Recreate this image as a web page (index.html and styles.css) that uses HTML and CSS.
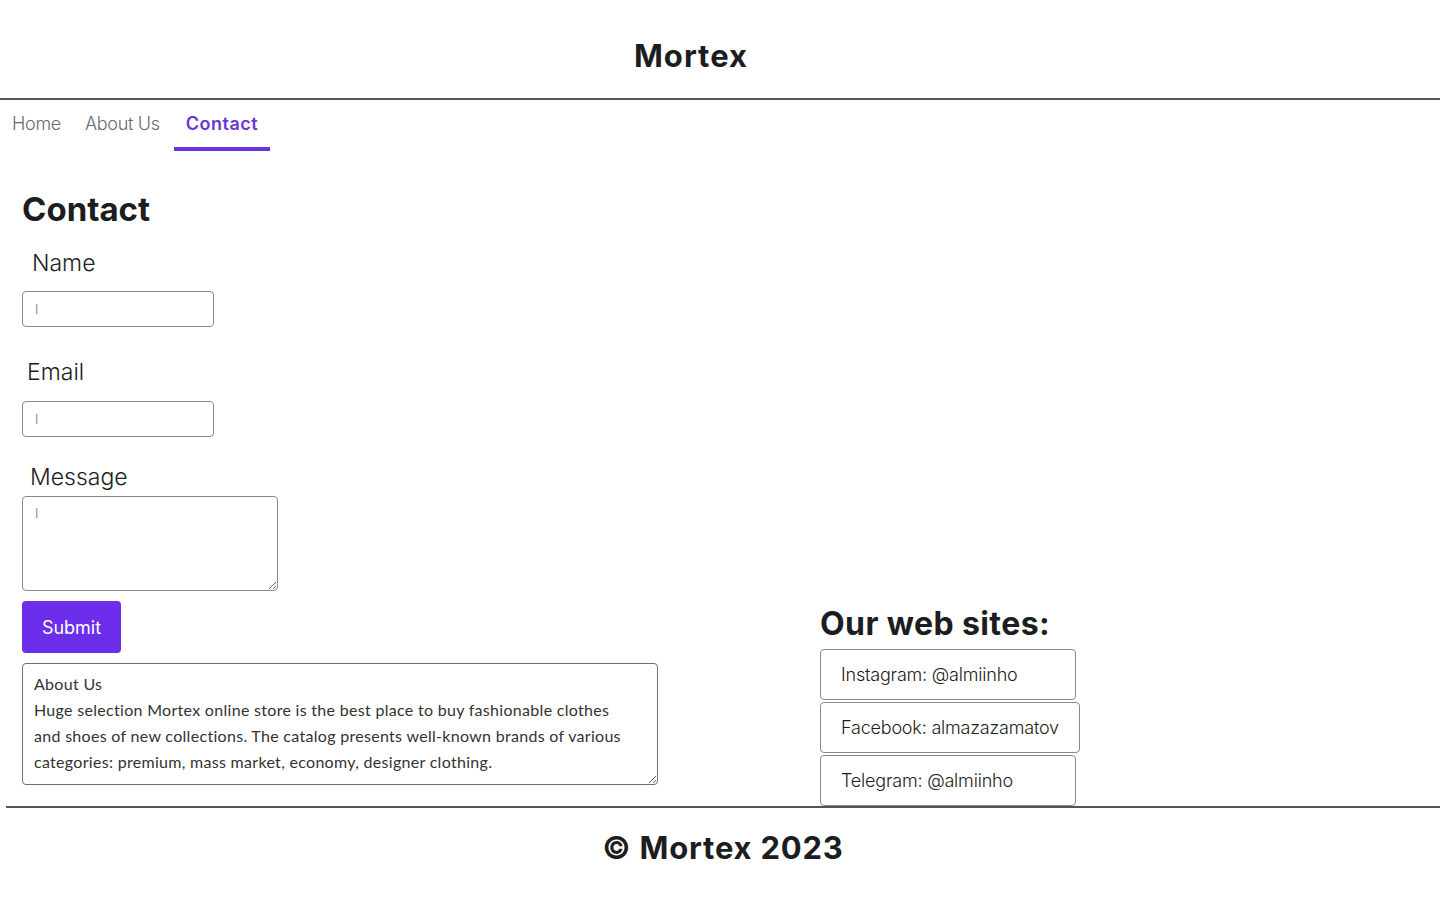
FILE: index.html
```html
<!DOCTYPE html>
<html lang="en">
  <head>
    <meta charset="UTF-8" />
    <meta name="viewport" content="width=device-width, initial-scale=1.0" />
    <title>Mortex - Contact</title>
    <link rel="stylesheet" href="styles.css">
  </head>
  <body>
    <header class="top">
      <h1 class="logo">Mortex</h1>
    </header>

    <nav class="tabs">
      <a href="#" class="tab">Home</a>
      <a href="#" class="tab">About Us</a>
      <a href="#" class="tab active">Contact</a>
    </nav>

    <main class="page">
      <div class="form_col">
        <h2 class="title">Contact</h2>
        <form class="contact_form">
          <div class="field field_name">
            <label for="name">Name</label>
            <input type="text" id="name" placeholder="I">
          </div>
          <div class="field field_email">
            <label for="email">Email</label>
            <input type="email" id="email" placeholder="I">
          </div>
          <div class="field field_msg">
            <label for="msg">Message</label>
            <textarea id="msg" placeholder="I"></textarea>
          </div>
          <button type="button" class="submitBtn">Submit</button>
        </form>
        <textarea class="about_box" readonly>About Us
Huge selection Mortex online store is the best place to buy fashionable clothes and shoes of new collections. The catalog presents well-known brands of various categories: premium, mass market, economy, designer clothing.</textarea>
      </div>

      <aside class="sites">
        <h2 class="sites_title">Our web sites:</h2>
        <a href="#" class="site_link">Instagram: @almiinho</a>
        <a href="#" class="site_link">Facebook: almazazamatov</a>
        <a href="#" class="site_link">Telegram: @almiinho</a>
      </aside>
    </main>

    <footer class="bottom">
      <p class="copy">© Mortex 2023</p>
    </footer>
  </body>
</html>
```

FILE: styles.css
```css
* {
  padding: 0;
  margin: 0;
  box-sizing: border-box;
}

body {
  font-family: Inter, "Liberation Sans", sans-serif;
  color: #1c1d21;
  background: #fff;
}

a {
  text-decoration: none;
}

/* header */
.top {
  height: 100px;
  padding: 38px 58px 0 0;
  border-bottom: 2px solid #555;
  text-align: center;
}

.logo {
  font-size: 31px;
  line-height: 36px;
  font-weight: 700;
  letter-spacing: 1px;
}

/* tabs */
.tabs {
  display: flex;
}

.tab {
  padding: 12px 12px 11px;
  font-size: 18px;
  line-height: 24px;
  font-weight: 300;
  letter-spacing: -0.3px;
  color: #666a73;
  border-bottom: 4px solid transparent;
}

.tab.active {
  margin-left: 2px;
  color: #6c34d8;
  font-weight: 600;
  letter-spacing: 0.5px;
  border-bottom-color: #6c34d8;
}

/* main */
.page {
  display: flex;
  align-items: flex-end;
  padding: 37px 0 0 22px;
}

.form_col {
  width: 636px;
  padding-bottom: 21px;
}

.title {
  font-size: 33px;
  line-height: 42px;
  font-weight: 700;
}

.field label {
  display: block;
  font-size: 23px;
  line-height: 27px;
  font-weight: 300;
  color: #1c1d21;
}

.field input {
  display: block;
  width: 192px;
  height: 36px;
  padding: 0 12px;
  border: 1px solid #8a8a8a;
  border-radius: 4px;
  outline: none;
  font-family: Inter, sans-serif;
  font-size: 13px;
}

.field_name {
  margin-top: 20px;
}
.field_name label {
  padding-left: 10px;
  margin-bottom: 14px;
}

.field_email {
  margin-top: 32px;
}
.field_email label {
  padding-left: 5px;
  margin-bottom: 15px;
}

.field_msg {
  margin-top: 27px;
}
.field_msg label {
  padding-left: 8px;
  margin-bottom: 5px;
}

.field textarea {
  display: block;
  width: 256px;
  height: 95px;
  padding: 8px 12px;
  border: 1px solid #8a8a8a;
  border-radius: 4px;
  outline: none;
  font-family: Inter, sans-serif;
  font-size: 13px;
}

.field input::placeholder,
.field textarea::placeholder {
  color: #777;
  font-weight: 300;
}

.submitBtn {
  display: block;
  margin-top: 10px;
  width: 99px;
  height: 52px;
  background: #6c2eea;
  color: #fff;
  border: none;
  border-radius: 4px;
  font-family: Inter, sans-serif;
  font-size: 18px;
  font-weight: 400;
  cursor: pointer;
}

.about_box {
  display: block;
  margin-top: 10px;
  width: 636px;
  height: 122px;
  padding: 7px 28px 7px 11px;
  border: 1px solid #6e6e6e;
  border-radius: 4px;
  outline: none;
  resize: vertical;
  font-family: Lato, sans-serif;
  font-size: 16px;
  line-height: 26px;
  font-weight: 400;
  letter-spacing: 0.3px;
  color: #333;
  overflow: hidden;
}

/* right column */
.sites {
  margin-left: 162px;
}

.sites_title {
  font-size: 32px;
  line-height: 39px;
  font-weight: 700;
  letter-spacing: 0.4px;
  margin-bottom: 6px;
}

.site_link {
  display: block;
  width: max-content;
  min-width: 256px;
  height: 51px;
  margin-top: 2px;
  padding: 0 20px;
  border: 1px solid #8a8a8a;
  border-radius: 4px;
  font-size: 18px;
  line-height: 49px;
  font-weight: 300;
  letter-spacing: -0.2px;
  color: #1c1d21;
}

.sites_title + .site_link {
  margin-top: 0;
}

/* footer */
.bottom {
  margin-left: 6px;
  border-top: 2px solid #555;
  padding-top: 22px;
  text-align: center;
}

.copy {
  font-size: 31px;
  line-height: 36px;
  font-weight: 700;
  letter-spacing: 0.8px;
}
```
